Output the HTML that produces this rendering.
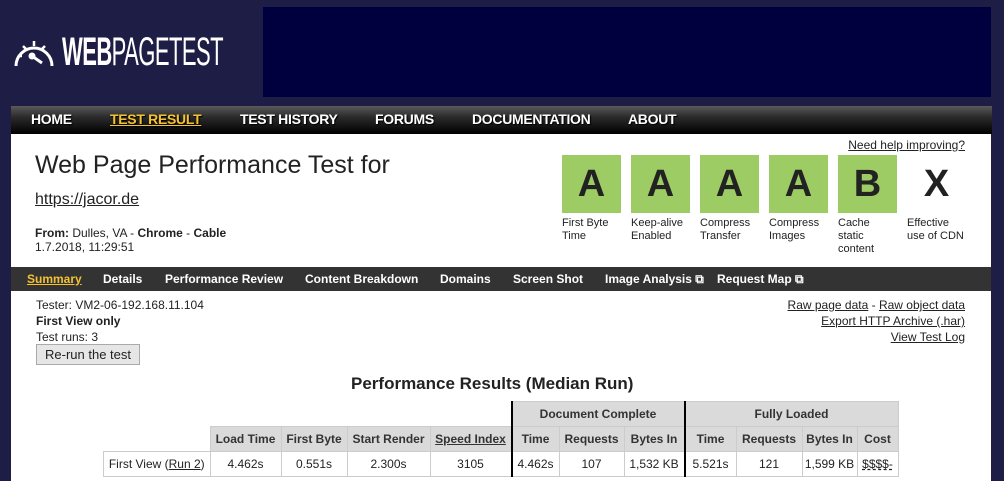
<!DOCTYPE html><html><head><style>
body{margin:0;width:1004px;height:481px;background:#1e1d45;font-family:"Liberation Sans",Arial,sans-serif;position:relative;overflow:hidden;color:#222}
.a{position:absolute}
.nav{left:11px;top:106px;width:981px;height:28px;background:linear-gradient(#5a5a5a,#2a2a2a 40%,#000);}
.nav span{position:absolute;top:5px;color:#fff;font-weight:bold;font-size:14px;letter-spacing:-0.3px;text-shadow:1px 1px 1px #000}
.white{left:11px;top:134px;width:980px;height:347px;background:#fff}
.g{position:absolute;top:155px;width:59px;height:58px;background:#9ccc63;font-weight:bold;font-size:38px;color:#222;text-align:center;line-height:58px}
.gl{position:absolute;top:217px;font-size:11px;line-height:13px;color:#222}
.bar{left:11px;top:267px;width:980px;height:24px;background:#333}
.bar span{position:absolute;top:5px;color:#fff;font-weight:bold;font-size:12px}
.s{font-size:12px}
table{border-collapse:collapse;position:absolute;left:103px;top:401px;font-size:12px}
td{border:1px solid #ccc;text-align:center;padding:0;height:24px}
.h{background:#dadada;font-weight:bold;color:#333}
.tk{border-left:2px solid #000}
u{text-decoration:underline}
</style></head><body>
<svg class="a" style="left:12px;top:35px" width="44" height="32" viewBox="0 0 44 32"><path d="M4 31 A18 18 0 1 1 40 31" fill="none" stroke="#fff" stroke-width="3"/><path d="M22 6v5M11 11l3 3M33 11l-3 3M6 21h4" stroke="#fff" stroke-width="2.5"/><circle cx="20" cy="21" r="3.5" fill="#fff"/><path d="M20 21l10 7" stroke="#fff" stroke-width="3"/></svg>
<div class="a" style="left:62px;top:30px;color:#fff;font-size:40px;font-weight:bold;letter-spacing:-1px;transform:scaleX(.55);transform-origin:left;white-space:nowrap">WEB<span style="font-weight:normal">PAGETEST</span></div>
<div class="a" style="left:263px;top:7px;width:728px;height:90px;background:#00003f"></div>
<div class="a nav"><span style="left:20px">HOME</span><span style="left:99px;color:#f5c232;text-decoration:underline">TEST RESULT</span><span style="left:229px">TEST HISTORY</span><span style="left:364px">FORUMS</span><span style="left:461px">DOCUMENTATION</span><span style="left:617px">ABOUT</span></div>
<div class="a white"></div>
<div class="a" style="left:35px;top:151px;font-size:25px;color:#222">Web Page Performance Test for</div>
<div class="a" style="left:35px;top:191px;font-size:16px;text-decoration:underline">https://jacor.de</div>
<div class="a s" style="left:35px;top:226px"><b>From:</b> Dulles, VA - <b>Chrome</b> - <b>Cable</b><br>1.7.2018, 11:29:51</div>
<div class="a s" style="right:39px;top:138px;text-decoration:underline">Need help improving?</div>
<div class="g" style="left:562px">A</div><div class="g" style="left:631px">A</div><div class="g" style="left:700px">A</div><div class="g" style="left:769px">A</div><div class="g" style="left:838px">B</div><div class="g" style="left:907px;background:none">X</div>
<div class="gl" style="left:562px">First Byte<br>Time</div><div class="gl" style="left:631px">Keep-alive<br>Enabled</div><div class="gl" style="left:700px">Compress<br>Transfer</div><div class="gl" style="left:769px">Compress<br>Images</div><div class="gl" style="left:838px">Cache<br>static<br>content</div><div class="gl" style="left:907px">Effective<br>use of CDN</div>
<div class="a bar"><span style="left:16px;color:#f5c232;text-decoration:underline">Summary</span><span style="left:92px">Details</span><span style="left:154px">Performance Review</span><span style="left:294px">Content Breakdown</span><span style="left:429px">Domains</span><span style="left:502px">Screen Shot</span><span style="left:594px">Image Analysis ⧉</span><span style="left:706px">Request Map ⧉</span></div>
<div class="a s" style="left:36px;top:297px;line-height:16px">Tester: VM2-06-192.168.11.104<br><b>First View only</b><br>Test runs: 3</div>
<div class="a" style="left:36px;top:344px;width:102px;height:19px;border:1px solid #aaa;background:#e6e6e6;font-size:13px;text-align:center;line-height:19px">Re-run the test</div>
<div class="a s" style="right:39px;top:297px;line-height:16px;text-align:right"><u>Raw page data</u> - <u>Raw object data</u><br><u>Export HTTP Archive (.har)</u><br><u>View Test Log</u></div>
<div class="a" style="left:351px;top:374px;font-size:17px;font-weight:bold">Performance Results (Median Run)</div>
<table>
<tr><td colspan="5" style="border:none;border-right:2px solid #000"></td><td class="h" colspan="3">Document Complete</td><td class="h tk" colspan="4">Fully Loaded</td></tr>
<tr><td style="border:none;width:106px"></td><td class="h" style="width:70px">Load Time</td><td class="h" style="width:65px">First Byte</td><td class="h" style="width:82px">Start Render</td><td class="h" style="width:80px"><u>Speed Index</u></td><td class="h tk" style="width:46px">Time</td><td class="h" style="width:64px">Requests</td><td class="h" style="width:59px">Bytes In</td><td class="h tk" style="width:50px">Time</td><td class="h" style="width:65px">Requests</td><td class="h" style="width:54px">Bytes In</td><td class="h" style="width:40px">Cost</td></tr>
<tr><td>First View (<u>Run 2</u>)</td><td>4.462s</td><td>0.551s</td><td>2.300s</td><td>3105</td><td class="tk">4.462s</td><td>107</td><td>1,532 KB</td><td class="tk">5.521s</td><td>121</td><td>1,599 KB</td><td><u style="text-decoration-style:dashed">$$$$-</u></td></tr>
</table>
</body></html>
